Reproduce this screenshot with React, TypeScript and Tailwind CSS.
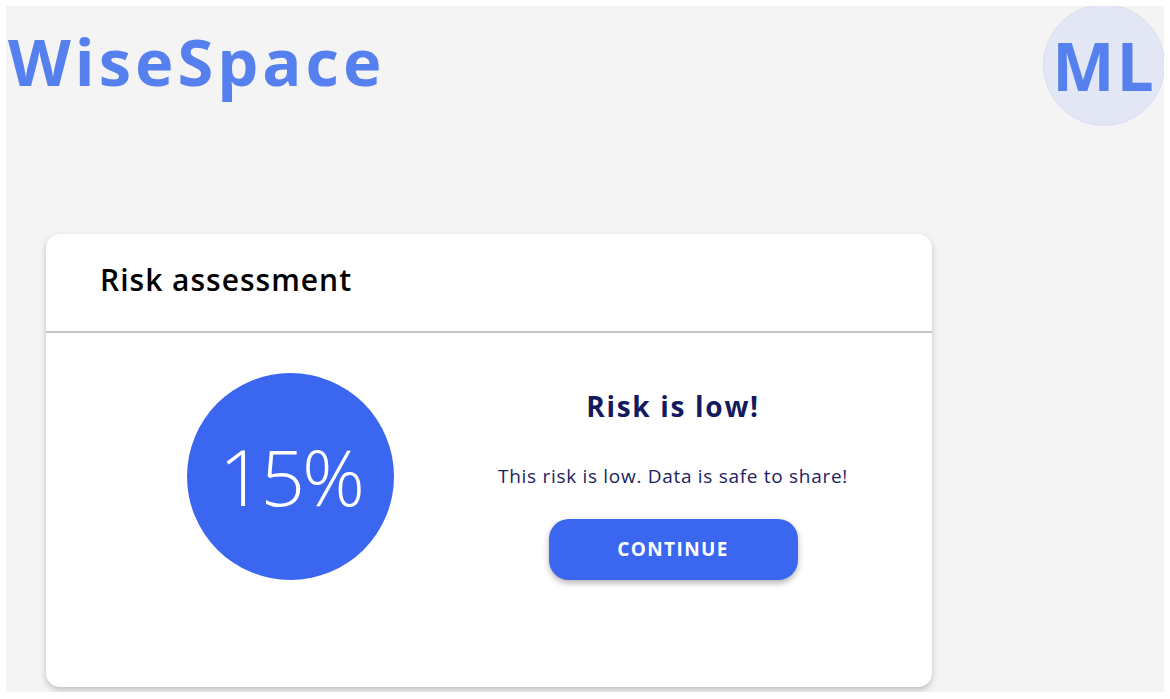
import React from "react";

export default function App() {
  const font = { fontFamily: '"Open Sans", "DejaVu Sans", sans-serif' };
  return (
    <div className="w-[1170px] h-[699px] bg-white p-[6px] overflow-hidden" style={font}>
      <div className="w-[1158px] h-[686px] bg-[#f4f4f4] flex flex-col overflow-hidden">
        <div className="flex justify-between items-start h-[124px]">
          <div className="pl-[2px] pt-[23px] text-[65px] leading-[64px] font-bold text-[#5580ee] tracking-[4px]">
            WiseSpace
          </div>
          <div className="mr-[-1px] mt-[-2px] w-[122px] h-[122px] rounded-full bg-[#e3e7f5] border border-[#d8dcec] flex items-center justify-center text-[66px] font-bold text-[#5580ee] tracking-[2px]">
            ML
          </div>
        </div>
        <div className="ml-[40px] mt-[104px] w-[886px] h-[453px] bg-white rounded-[14px] shadow-[0_3px_6px_rgba(0,0,0,0.22)] flex flex-col">
          <div className="h-[99px] border-b-2 border-[#c4c4c4] pl-[54px] pt-[23px] text-[30px] font-semibold text-black tracking-[1px]">
            Risk assessment
          </div>
          <div className="flex flex-1">
            <div className="w-[490px] flex pl-[141px] pt-[40px]">
              <div className="w-[207px] h-[207px] rounded-full bg-[#3a66f0] flex items-center justify-center text-white text-[78px] font-light tracking-[-3px]">
                15%
              </div>
            </div>
            <div className="w-[274px] flex flex-col items-center pt-[52px]">
              <div className="text-[28px] font-bold text-[#141a5e] whitespace-nowrap tracking-[1.7px]">Risk is low!</div>
              <div className="mt-[35px] text-[19px] text-[#1c2260] whitespace-nowrap tracking-[0.7px]">
                This risk is low. Data is safe to share!
              </div>
              <button className="mt-[28px] w-[249px] h-[61px] rounded-[20px] bg-[#3a66f0] text-white font-bold text-[19px] tracking-[1.4px] shadow-[0_3px_6px_rgba(0,0,0,0.3)]">
                CONTINUE
              </button>
            </div>
          </div>
        </div>
      </div>
    </div>
  );
}
